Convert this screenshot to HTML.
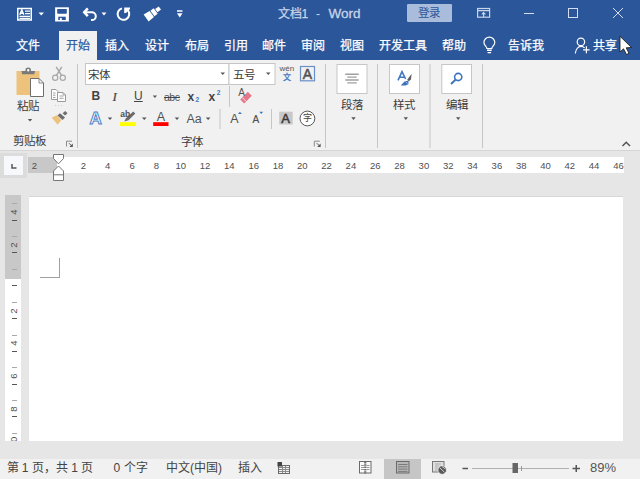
<!DOCTYPE html>
<html lang="zh-CN">
<head>
<meta charset="utf-8">
<style>
*{margin:0;padding:0;box-sizing:border-box}
html,body{width:640px;height:479px;overflow:hidden;background:#e6e6e6;font-family:"Liberation Sans",sans-serif;}
.a{position:absolute}
.t{position:absolute;white-space:nowrap;line-height:1;}
#title{left:0;top:0;width:640px;height:60px;background:#2b579a}
#ribbon{left:0;top:60px;width:640px;height:91px;background:#f1f1f1;border-bottom:1px solid #d5d5d5}
#status{left:0;top:459px;width:640px;height:20px;background:#f1f1f1}
.tab{color:#fff;font-size:12px;-webkit-text-stroke:0.25px #fff}
.lbl{color:#3c3c3c;font-size:11.5px}
.sep{position:absolute;width:1px;background:#c6c6c6}
.dd{position:absolute;width:0;height:0;border-left:2.5px solid transparent;border-right:2.5px solid transparent;border-top:3px solid #555}
.rn{position:absolute;font-size:9.5px;color:#505050;line-height:1;transform:translateX(-50%)}
.vn{position:absolute;font-size:9.5px;color:#505050;line-height:1;transform:translate(-50%,-50%) rotate(-90deg)}
.tk{position:absolute;left:12px;width:5px;height:1px}
</style>
</head>
<body>
<!-- title bar + tabs -->
<div id="title" class="a"></div>
<div id="ribbon" class="a"></div>
<div id="status" class="a"></div>

<div class="a" style="left:0;top:153px;width:26.5px;height:25px;background:#dcdcdc"></div>
<div class="a" style="left:4px;top:156px;width:19px;height:19px;background:#f7f8fb"></div>
<svg class="a" style="left:0;top:150px" width="640" height="50" viewBox="0 150 640 50"><path d="M12 164V168H16.5" fill="none" stroke="#555" stroke-width="1.5"/></svg>
<div class="a" style="left:28px;top:157px;width:596px;height:15.5px;background:#fff"></div>
<div class="a" style="left:28px;top:157px;width:29px;height:15.5px;background:#c8c8c8"></div>
<div class="rn" style="left:34.5px;top:160.5px">2</div>
<div class="rn" style="left:83.4px;top:160.5px">2</div>
<div class="rn" style="left:107.7px;top:160.5px">4</div>
<div class="rn" style="left:132.1px;top:160.5px">6</div>
<div class="rn" style="left:156.4px;top:160.5px">8</div>
<div class="rn" style="left:180.7px;top:160.5px">10</div>
<div class="rn" style="left:205.0px;top:160.5px">12</div>
<div class="rn" style="left:229.3px;top:160.5px">14</div>
<div class="rn" style="left:253.7px;top:160.5px">16</div>
<div class="rn" style="left:278.0px;top:160.5px">18</div>
<div class="rn" style="left:302.3px;top:160.5px">20</div>
<div class="rn" style="left:326.6px;top:160.5px">22</div>
<div class="rn" style="left:350.9px;top:160.5px">24</div>
<div class="rn" style="left:375.3px;top:160.5px">26</div>
<div class="rn" style="left:399.6px;top:160.5px">28</div>
<div class="rn" style="left:423.9px;top:160.5px">30</div>
<div class="rn" style="left:448.2px;top:160.5px">32</div>
<div class="rn" style="left:472.5px;top:160.5px">34</div>
<div class="rn" style="left:496.9px;top:160.5px">36</div>
<div class="rn" style="left:521.2px;top:160.5px">38</div>
<div class="rn" style="left:545.5px;top:160.5px">40</div>
<div class="rn" style="left:569.8px;top:160.5px">42</div>
<div class="rn" style="left:594.1px;top:160.5px">44</div>
<div class="rn" style="left:618.5px;top:160.5px">46</div>
<svg class="a" style="left:50px;top:152px" width="18" height="32" viewBox="50 152 18 32">
 <path d="M53.5 154.5H63.5V158.5L58.5 163.8L53.5 158.5Z" fill="#fff" stroke="#777" stroke-width="1"/>
 <path d="M58.5 166L63.5 171V180.5H53.5V171Z" fill="#fff" stroke="#777" stroke-width="1"/>
 <path d="M53.5 174.8H63.5" stroke="#777" stroke-width="1"/>
</svg>
<div class="a" style="left:29px;top:196px;width:594px;height:245px;background:#fff;border-top:1px solid #d6d6d6"></div>
<div class="a" style="left:5px;top:195px;width:16px;height:246px;background:#fff"></div>
<div class="a" style="left:5px;top:195px;width:16px;height:84px;background:#c8c8c8"></div>
<div class="vn" style="left:14.3px;top:212.1px">4</div>
<div class="tk" style="top:219.6px;background:#555"></div>
<div class="tk" style="top:203.3px;background:#aaa"></div>
<div class="vn" style="left:14.3px;top:244.9px">2</div>
<div class="tk" style="top:252.4px;background:#555"></div>
<div class="tk" style="top:236.1px;background:#aaa"></div>
<div class="tk" style="top:285.2px;background:#555"></div>
<div class="tk" style="top:268.9px;background:#aaa"></div>
<div class="vn" style="left:14.3px;top:310.5px">2</div>
<div class="tk" style="top:318.0px;background:#555"></div>
<div class="tk" style="top:301.7px;background:#aaa"></div>
<div class="vn" style="left:14.3px;top:343.3px">4</div>
<div class="tk" style="top:350.8px;background:#555"></div>
<div class="tk" style="top:334.5px;background:#aaa"></div>
<div class="vn" style="left:14.3px;top:376.1px">6</div>
<div class="tk" style="top:383.6px;background:#555"></div>
<div class="tk" style="top:367.3px;background:#aaa"></div>
<div class="vn" style="left:14.3px;top:408.9px">8</div>
<div class="tk" style="top:416.4px;background:#555"></div>
<div class="tk" style="top:400.1px;background:#aaa"></div>
<div class="vn" style="left:14.3px;top:441.7px">10</div>
<div class="tk" style="top:432.9px;background:#aaa"></div>
<div class="a" style="left:0;top:441px;width:640px;height:18px;background:#e6e6e6"></div>
<div class="a" style="left:59px;top:258px;width:1px;height:20px;background:#a0a0a0"></div>
<div class="a" style="left:40px;top:277px;width:20px;height:1px;background:#a0a0a0"></div>

<div class="t" style="left:6.5px;top:462px;font-size:12px;color:#444">第 1 页，共 1 页</div>
<div class="t" style="left:113.5px;top:462px;font-size:12px;color:#444">0 个字</div>
<div class="t" style="left:166px;top:462px;font-size:12px;color:#444">中文(中国)</div>
<div class="t" style="left:237.5px;top:462px;font-size:12px;color:#444">插入</div>
<div class="a" style="left:384px;top:459px;width:37px;height:20px;background:#c6c6c6"></div>
<svg class="a" style="left:0;top:455px" width="640" height="24" viewBox="0 455 640 24">
 <g fill="none" stroke="#6a6a6a" stroke-width="1">
  <rect x="278.5" y="465.5" width="11" height="8"/>
 </g>
 <g stroke="#8a8a8a" stroke-width="1"><path d="M279 467.5H289 M279 469.5H289 M279 471.5H289 M282.5 466V473 M285.5 466V473"/></g>
 <rect x="277.5" y="462" width="4.5" height="4.5" fill="#444"/>
 <rect x="359.5" y="461.5" width="11.5" height="11.5" fill="#fafafa" stroke="#6a6a6a" stroke-width="1"/>
 <g stroke="#9a9a9a" stroke-width="1"><path d="M361 465.5H364 M361 467.5H364 M361 469.5H364 M366.5 465.5H369.5 M366.5 467.5H369.5 M366.5 469.5H369.5"/></g>
 <path d="M365.25 462V474" stroke="#6a6a6a" stroke-width="2.2" stroke-dasharray="1.5 0.8"/>
 <rect x="396.5" y="461.5" width="12.5" height="11.5" fill="#b8b8b8" stroke="#6a6a6a" stroke-width="1"/>
 <g stroke="#7a7a7a" stroke-width="1"><path d="M398 464.5H407.5 M398 466.8H407.5 M398 469.1H407.5 M398 471.4H407.5"/></g>
 <rect x="432.5" y="461.5" width="11.5" height="10.5" fill="#e0e0e0" stroke="#777" stroke-width="1"/>
 <g stroke="#aaa" stroke-width="1"><path d="M435 464H441 M435 466H439 M435 468H438 M435 470H438"/></g>
 <circle cx="442.2" cy="470" r="4.3" fill="#5a5a5a" stroke="#f1f1f1" stroke-width="0.8"/>
 <path d="M439.8 467.8L444.5 472.3 M442 466.5L445.5 469" stroke="#cfcfcf" stroke-width="1"/>
 <path d="M462.5 468.5H468" stroke="#555" stroke-width="1.5"/>
 <path d="M472 468.5H569" stroke="#b0b0b0" stroke-width="1"/>
 <rect x="512.5" y="463" width="5.5" height="10" fill="#666"/>
 <path d="M521.5 466V471" stroke="#999" stroke-width="1"/>
 <path d="M572.5 468.5H580 M576.25 465V472" stroke="#555" stroke-width="1.5"/>
</svg>
<div class="t" style="left:590px;top:461px;font-size:13px;color:#555">89%</div>

<svg class="a" style="left:0;top:0" width="640" height="31" viewBox="0 0 640 31">
 <g fill="none" stroke="#fff" stroke-width="1.5">
  <rect x="17.75" y="8.5" width="13.5" height="11.5"/>
 </g>
 <g stroke="#fff" fill="none">
  <path d="M19.8 14.8 L21.8 9.9 L23.8 14.8 M20.5 13.2 H23.1" stroke-width="1.5"/>
  <path d="M25 11.2H30 M25 13.6H30 M19.5 16.4H30 M19.5 18.4H30" stroke-width="1.3"/>
 </g>
 <path d="M38.5 12.5H44L41.25 15.5Z" fill="#fff"/>
 <path d="M55.1 7.3H68.9V21.5H55.1Z" fill="#fff"/>
 <path d="M57.2 9H66.8V13.2L66.2 13.8H57.8L57.2 13.2Z" fill="#2b579a"/>
 <rect x="58.25" y="16.7" width="7.5" height="3.3" fill="#2b579a"/>
 <rect x="59.9" y="18" width="1.9" height="3" fill="#fff"/>
 <g fill="none" stroke="#fff" stroke-width="2">
  <path d="M85 12.3H91.8A4 3.9 0 0 1 91.8 20.1H91"/>
  <path d="M87.8 8.3L84.2 12.3L87.8 16.2" stroke-width="2.5"/>
  <path d="M122 8.4A5.8 5.8 0 1 0 127.6 10"/>
 </g>
 <path d="M101.5 12.5H106.5L104 15.5Z" fill="#fff"/>
 <path d="M124.2 7.4H130V9L126.3 12.8L124.2 13.2Z" fill="#fff"/>
 <g transform="translate(0.3 -1) rotate(-36 152.7 14)" fill="#fff">
  <path d="M144.2 9.8L151.2 10.3V17.7L144.2 18.2Z"/>
  <rect x="152" y="10.6" width="4" height="6.8"/>
  <rect x="156.8" y="12" width="4.4" height="4"/>
 </g>
 <path d="M177 11H182.5" stroke="#fff" stroke-width="1.5"/>
 <path d="M177 13.3H182.5L179.75 17.5Z" fill="#fff"/>
 <!-- window controls -->
 <g fill="none" stroke="#c9d4e8" stroke-width="1.2">
  <rect x="477.6" y="8.5" width="12" height="8.7"/>
  <path d="M477.6 10.6H489.6 M483.6 17V12.5 M481.8 14.3L483.6 12.5L485.4 14.3"/>
 </g>
 <g fill="none" stroke="#d5def0" stroke-width="1">
  <path d="M524 13.5H534"/>
  <rect x="568.5" y="8.5" width="9" height="9"/>
  <path d="M613 8L623 18 M623 8L613 18"/>
 </g>
 <rect x="407" y="4" width="45" height="18" rx="1.2" fill="#a9bcdb"/>
</svg>
<div class="t" style="left:277.5px;top:8px;font-size:12px;color:#c9d4e8;-webkit-text-stroke:0.25px #c9d4e8">文档1</div><div class="t" style="left:316px;top:8px;font-size:12px;color:#c9d4e8">-</div><div class="t" style="left:328.5px;top:7px;font-size:13.5px;color:#c9d4e8;-webkit-text-stroke:0.3px #c9d4e8">Word</div>
<div class="t" style="left:417.5px;top:8px;font-size:11.5px;color:#2b579a">登录</div>
<div class="a" style="left:59px;top:31px;width:38px;height:29px;background:#f1f1f1"></div>
<div class="t tab" style="left:16px;top:40px">文件</div>
<div class="t tab" style="left:66px;top:40px;color:#2b579a;-webkit-text-stroke:0.2px #2b579a">开始</div>
<div class="t tab" style="left:105px;top:40px">插入</div>
<div class="t tab" style="left:144.5px;top:40px">设计</div>
<div class="t tab" style="left:184.5px;top:40px">布局</div>
<div class="t tab" style="left:224px;top:40px">引用</div>
<div class="t tab" style="left:262px;top:40px">邮件</div>
<div class="t tab" style="left:301px;top:40px">审阅</div>
<div class="t tab" style="left:340px;top:40px">视图</div>
<div class="t tab" style="left:379px;top:40px">开发工具</div>
<div class="t tab" style="left:441.5px;top:40px">帮助</div>
<div class="t tab" style="left:508px;top:40px">告诉我</div>
<div class="t tab" style="left:592.5px;top:40px">共享</div>

<svg class="a" style="left:0;top:60px" width="640" height="92" viewBox="0 60 640 92">
 <!-- separators -->
 <g fill="#c6c6c6">
  <rect x="77" y="64" width="1" height="84"/>
  <rect x="325" y="64" width="1" height="84"/>
  <rect x="377" y="64" width="1" height="84"/>
  <rect x="429.5" y="64" width="1" height="84"/>
  <rect x="482" y="64" width="1" height="84"/>
  <rect x="229" y="86" width="1" height="21"/>
  <rect x="219.5" y="109" width="1" height="20"/>
  <rect x="271" y="109" width="1" height="20"/>
 </g>
 <!-- clipboard paste -->
 <path d="M16.5 71H39.5V95H16.5Z" fill="#ecc27d"/>
 <path d="M21.5 71H35L34.3 74.3H22.2Z" fill="#7a7a7a"/><circle cx="28.2" cy="70.3" r="2" fill="#fff" stroke="#7a7a7a" stroke-width="1.6"/>
 <path d="M30.5 78.5H39L43.5 83V96.5H30.5Z" fill="#fff" stroke="#6e6e6e" stroke-width="1"/>
 <path d="M39 78.5V83H43.5" fill="none" stroke="#6e6e6e" stroke-width="0.8"/>
 <path d="M27.8 119H32.2L30 121.6Z" fill="#555"/>
 <!-- scissors -->
 <g fill="none" stroke="#a8a8a8" stroke-width="1.2">
  <circle cx="55.2" cy="77.8" r="2.6"/>
  <circle cx="62.8" cy="77.8" r="2.6"/>
 </g>
 <path d="M56.3 75.6L61.8 66.8 M61.7 75.6L56.2 66.8" stroke="#a8a8a8" stroke-width="1.5"/>
 <!-- copy -->
 <path d="M51.5 89.5H56L58 91.5V99.5H51.5Z" fill="#fff" stroke="#9a9a9a" stroke-width="1"/>
 <g stroke="#a0a0a0" stroke-width="1"><path d="M53 93H55.5 M53 95.2H55.5 M53 97.5H55.5"/></g>
 <path d="M57.5 92.5H63L65.5 95V101.5H57.5Z" fill="#fff" stroke="#9a9a9a" stroke-width="1"/>
 <path d="M63 92.5V95H65.5" fill="none" stroke="#9a9a9a" stroke-width="0.8"/>
 <g stroke="#a0a0a0" stroke-width="1"><path d="M59.5 96H63.5 M59.5 98.3H63.5"/></g>
 <path d="M55 105.5H64" stroke="#c8c8c8" stroke-width="0.8" stroke-dasharray="1.2 1.8"/>
 <!-- format painter -->
 <path d="M51.7 117.6L56.8 115.2L61.3 120.2L57.6 124.8Z" fill="#ecc27d"/>
 <path d="M57.4 115.6L60 113.3L65 117.6L62.5 119.9Z" fill="#6e6e6e"/>
 <path d="M62.6 113.2L65.2 110.9L67.5 113.3L65 115.6Z" fill="#6e6e6e"/>
 <path d="M66.5 146.5V141.2H72" fill="none" stroke="#8a8a8a" stroke-width="1"/>
 <path d="M69 143.2L71.8 146" fill="none" stroke="#555" stroke-width="1"/>
 <path d="M72.8 143.6V147H69.4Z" fill="#555"/>
 <!-- font boxes -->
 <rect x="85.5" y="63.5" width="143.5" height="21" fill="#fff" stroke="#c6c6c6"/>
 <rect x="229" y="63.5" width="46" height="21" fill="#fff" stroke="#c6c6c6"/>
 <path d="M220.5 72.5H225L222.75 75Z" fill="#555"/>
 <path d="M266 72.5H270.5L268.25 75Z" fill="#555"/>
 <!-- A boxed -->
 <rect x="300.5" y="66.5" width="14" height="14.3" fill="none" stroke="#6b90c8" stroke-width="1.2"/>
 <!-- row 2 dd -->
 <path d="M152.75 95.5H157L154.9 98Z" fill="#555"/>
 <!-- eraser -->
 <path d="M240.2 99.5L247.8 91.8L251.8 95.8L244.2 103.5Z" fill="#e5788a"/>
 <path d="M242.2 97.5L246.2 101.5" stroke="#f1f1f1" stroke-width="0.9"/>
 <!-- row3 -->
 <path d="M107.75 117.5H112.25L110 120Z" fill="#555"/>
 <path d="M141.9 117.5H146.6L144.25 120Z" fill="#555"/>
 <path d="M174.7 117.5H179.2L177 120Z" fill="#555"/>
 <path d="M205.8 117.5H210.5L208.15 120Z" fill="#555"/>
 <rect x="120" y="122.2" width="16.1" height="3.8" fill="#ffff00"/>
 <path d="M124.3 121.5L126 118.2L133.2 111.5L135.3 113.6L128.5 120.2Z" fill="#6a6a6a"/>
 <rect x="153.2" y="122.2" width="15.3" height="3.8" fill="#ff0000"/>
 <path d="M238 114L239.9 111.7L241.8 114Z" fill="#3f77c2"/>
 <path d="M259.3 111.7L263.2 111.7L261.25 114Z" fill="#3f77c2"/>
 <rect x="279.2" y="111.7" width="13.5" height="12.8" fill="#c8c8c8"/>
 <circle cx="307.4" cy="118.5" r="7.4" fill="#fff" stroke="#555" stroke-width="1"/>
 <path d="M314.3 146.5V141.2H319.8" fill="none" stroke="#8a8a8a" stroke-width="1"/>
 <path d="M316.8 143.2L319.6 146" fill="none" stroke="#555" stroke-width="1"/>
 <path d="M320.6 143.6V147H317.2Z" fill="#555"/>
 <!-- paragraph / styles / editing boxes -->
 <rect x="337" y="64.5" width="30" height="29" fill="#fff" stroke="#c6c6c6"/>
 <rect x="389.5" y="64.5" width="30" height="29" fill="#fff" stroke="#c6c6c6"/>
 <rect x="441.8" y="64.5" width="29.7" height="29" fill="#fff" stroke="#c6c6c6"/>
 <g stroke="#a0a0a0" stroke-width="1.4"><path d="M345.2 74.25H358.7 M347.2 77.1H356.8 M345.2 80H358.7 M347.2 82.9H356.8"/></g>
 <path d="M351.3 117.3H355.7L353.5 120Z" fill="#555"/>
 <path d="M403.6 117.3H408L405.8 120Z" fill="#555"/>
 <path d="M456 117.3H460.4L458.2 120Z" fill="#555"/>
 <!-- styles icon -->
 <path d="M398 80.4L402 71.6L405.6 79 M399.6 77.2H404.2" fill="none" stroke="#3f77c2" stroke-width="1.6"/>
 <path d="M407.2 79.8L411.6 73.8L411 79.5L408.8 81.2Z" fill="#5f5f5f"/>
 <path d="M400.7 85.6L404.8 81.2L408.5 80.8L408.4 84.2L405.5 85.6Z" fill="#3a72c0"/>
 <path d="M405.5 81.5L407.5 83.5" stroke="#a9c3e6" stroke-width="1"/>
 <!-- magnifier -->
 <circle cx="458.2" cy="77" r="3.6" fill="none" stroke="#3d75bd" stroke-width="1.6"/>
 <path d="M455.5 79.8L451 84" stroke="#3d75bd" stroke-width="2"/>
 <!-- collapse -->
 <path d="M622.5 146L626.2 142.2L630 146" fill="none" stroke="#555" stroke-width="1.5"/>
</svg>
<div class="t lbl" style="left:16.5px;top:100.5px">粘贴</div>
<div class="t lbl" style="left:13px;top:135.5px">剪贴板</div>
<div class="t lbl" style="left:88px;top:69.5px">宋体</div>
<div class="t lbl" style="left:232.5px;top:69.5px">五号</div>
<div class="t" style="left:279.5px;top:65.3px;font-size:8px;color:#555">wén</div>
<div class="t" style="left:283px;top:73.5px;font-size:8px;color:#3f77c2;-webkit-text-stroke:0.3px #3f77c2">文</div>
<div class="t" style="left:302.8px;top:67px;font-size:14px;color:#505050;-webkit-text-stroke:0.5px #505050">A</div>
<div class="t" style="left:91.5px;top:90px;font-size:12px;font-weight:bold;color:#444">B</div>
<div class="t" style="left:112.5px;top:90px;font-size:13px;font-style:italic;font-family:'Liberation Serif',serif;color:#444;-webkit-text-stroke:0.2px #444">I</div>
<div class="t" style="left:134px;top:90px;font-size:12px;color:#444;text-decoration:underline">U</div>
<div class="t" style="left:164px;top:91.5px;font-size:10.5px;color:#555;letter-spacing:-0.5px">abc</div><div class="a" style="left:164px;top:96.5px;width:16px;height:1px;background:#444"></div>
<div class="t" style="left:187.5px;top:91px;font-size:12px;font-weight:bold;color:#444">x</div><div class="t" style="left:195.4px;top:96.8px;font-size:6.5px;font-weight:bold;color:#3f77c2">2</div>
<div class="t" style="left:208.5px;top:91px;font-size:12px;font-weight:bold;color:#444">x</div><div class="t" style="left:216.7px;top:89.5px;font-size:6.5px;font-weight:bold;color:#3f77c2">2</div>
<div class="t" style="left:238.3px;top:88px;font-size:10px;color:#555">A</div>
<svg class="a" style="left:86px;top:106px" width="20" height="20" viewBox="86 106 20 20"><text x="89.6" y="123.5" font-family="Liberation Sans" font-weight="bold" font-size="17" fill="#fff" stroke="#4a80c8" stroke-width="1">A</text></svg>
<div class="t" style="left:120.2px;top:110.3px;font-size:8.5px;font-weight:bold;color:#505050">ab</div>
<div class="t" style="left:156.8px;top:111.2px;font-size:12.5px;color:#505050">A</div>
<div class="t" style="left:186.5px;top:112.5px;font-size:12.5px;color:#555">Aa</div>
<div class="t" style="left:230.2px;top:112.5px;font-size:12.5px;color:#505050">A</div>
<div class="t" style="left:252.5px;top:115px;font-size:10px;color:#505050;-webkit-text-stroke:0.2px #505050">A</div>
<div class="t" style="left:281.3px;top:112px;font-size:13px;color:#383838;-webkit-text-stroke:0.5px #383838">A</div>
<div class="t" style="left:303px;top:114px;font-size:9px;color:#444">字</div>
<div class="t lbl" style="left:181px;top:136.5px">字体</div>
<div class="t lbl" style="left:340.5px;top:99.5px">段落</div>
<div class="t lbl" style="left:393px;top:99.5px">样式</div>
<div class="t lbl" style="left:445.5px;top:99.5px">编辑</div>

<svg class="a" style="left:470px;top:31px" width="170" height="29" viewBox="470 31 170 29">
 <g fill="none" stroke="#fff" stroke-width="1.2">
  <path d="M486.9 48.5C486.9 46.6 483.9 45.5 483.9 42.6A5.45 5.45 0 0 1 494.8 42.6C494.8 45.5 491.8 46.6 491.8 48.5Z"/>
  <path d="M487 50.3H491.7 M487.6 52.6H491.1" stroke-width="1.4"/>
  <circle cx="580.9" cy="41.9" r="3.7"/>
  <path d="M575.3 53.5C575.8 49.2 578.2 46.3 581 46.3C582.4 46.3 583.6 46.8 584.6 47.8"/>
  <path d="M586.4 46.3V53.2 M583.1 49.8H589.6"/>
 </g>
 <path d="M620 36.3L620 52L623.5 48.8L626.5 54.5L629 53.3L626.2 47.8L631.5 47.5Z" fill="#fff" stroke="#111" stroke-width="0.8"/>
</svg>

</body>
</html>
